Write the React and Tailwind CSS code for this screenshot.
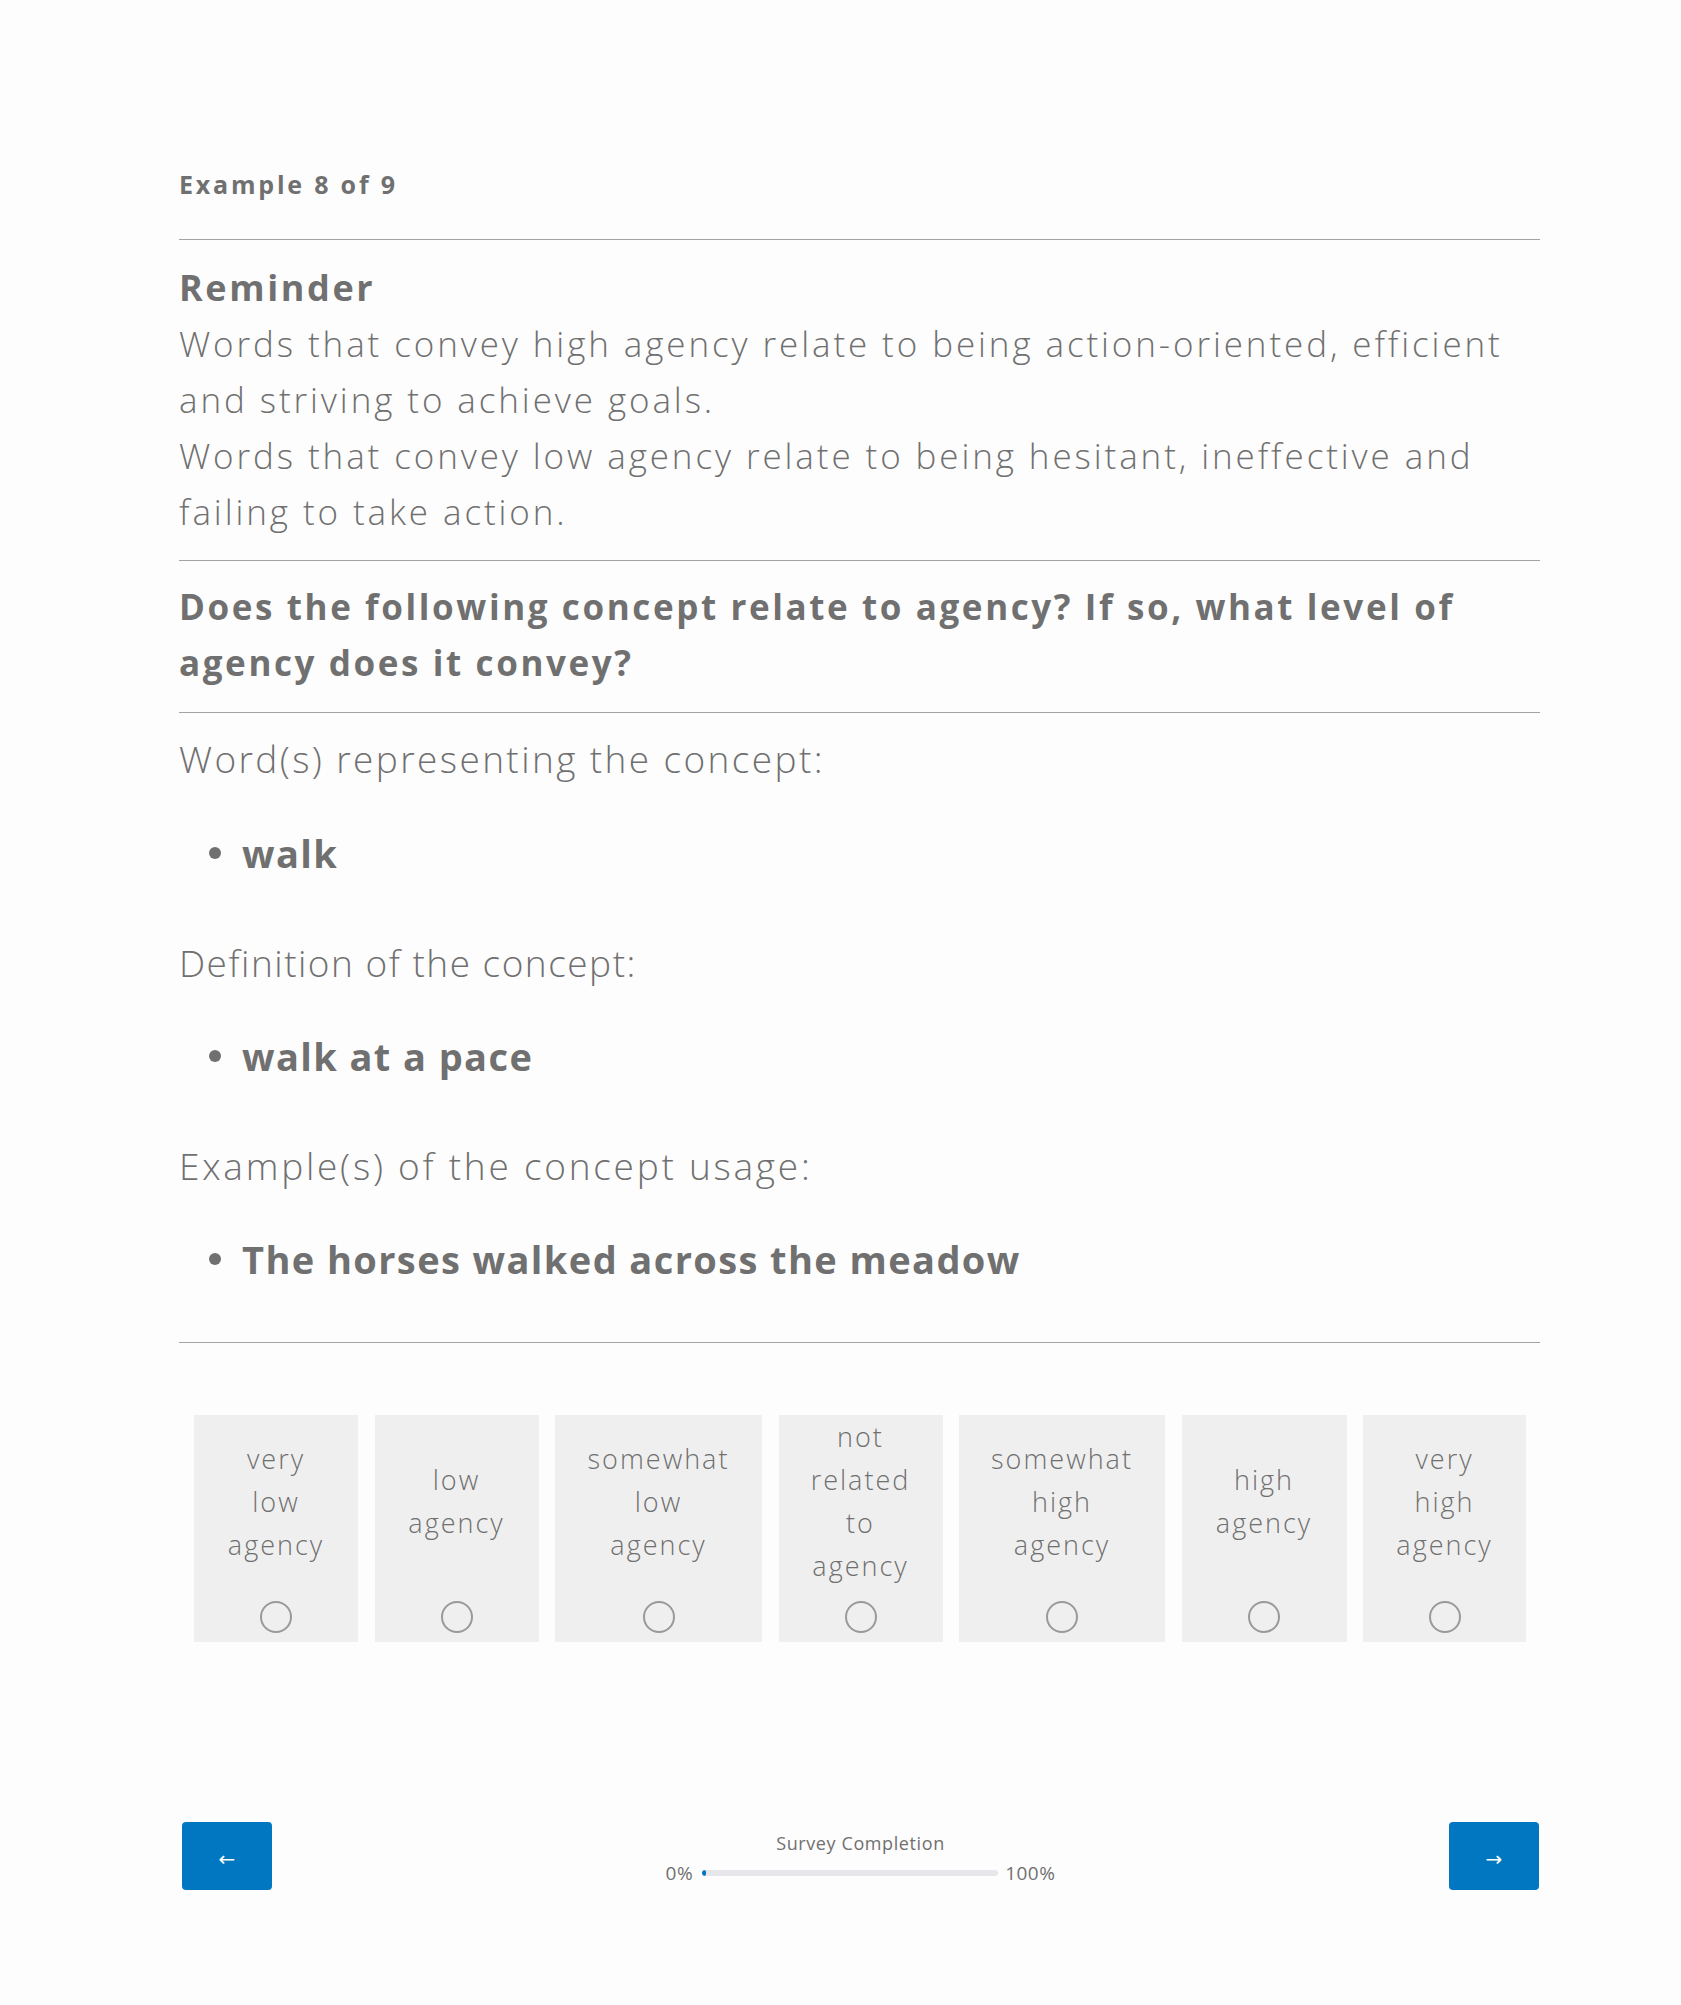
const options = [
  { w: "w-[164px]", lines: ["very", "low", "agency"] },
  { w: "w-[164px]", lines: ["low", "agency"] },
  { w: "w-[207px]", lines: ["somewhat", "low", "agency"] },
  { w: "w-[164px]", lines: ["not", "related", "to", "agency"] },
  { w: "w-[206px]", lines: ["somewhat", "high", "agency"] },
  { w: "w-[165px]", lines: ["high", "agency"] },
  { w: "w-[163px]", lines: ["very", "high", "agency"] },
];

function Rule({ className }) {
  return <div className={"h-px w-full bg-[#a3a3a3] " + className} />;
}

function Label({ children, className }) {
  return (
    <div className={"h-[56px] whitespace-nowrap text-[37px] font-light leading-[56px] " + className}>
      {children}
    </div>
  );
}

function Bullet({ children, className }) {
  return (
    <div className={"flex h-[56px] items-center pl-[30px] " + className}>
      <span className="h-[12px] w-[12px] shrink-0 rounded-full bg-[#707070]" />
      <span className="ml-[21px] whitespace-nowrap text-[38px] font-bold leading-[56px] tracking-[1.4px]">
        {children}
      </span>
    </div>
  );
}

export default function App() {
  return (
    <div className="min-h-[2005px] bg-[#fdfdfd] font-['Open_Sans','Noto_Sans',sans-serif] text-[#707070]">
      <div className="ml-[179px] w-[1361px] pt-[164px] pb-[115px]">
        <div className="h-[40px] text-[25px] font-bold leading-[40px] tracking-[2.8px]">
          Example 8 of 9
        </div>
        <Rule className="mt-[35px]" />

        <div className="mt-[20px] h-[56px] text-[36px] font-bold leading-[56px] tracking-[2.6px]">
          Reminder
        </div>
        <div className="text-[35px] font-light leading-[56px] tracking-[2.9px]">
          <span className="block whitespace-nowrap">
            Words that convey high agency relate to being action-oriented, efficient
          </span>
          <span className="block whitespace-nowrap">and striving to achieve goals.</span>
          <span className="block whitespace-nowrap">
            Words that convey low agency relate to being hesitant, ineffective and
          </span>
          <span className="block whitespace-nowrap">failing to take action.</span>
        </div>
        <Rule className="mt-[20px]" />

        <div className="mt-[18px] text-[35px] font-bold leading-[56px] tracking-[2.6px]">
          <span className="block whitespace-nowrap">
            Does the following concept relate to agency? If so, what level of
          </span>
          <span className="block whitespace-nowrap">agency does it convey?</span>
        </div>
        <Rule className="mt-[21px]" />

        <Label className="mt-[18px] tracking-[2.4px]">Word(s) representing the concept:</Label>
        <Bullet className="mt-[38px]">walk</Bullet>
        <Label className="mt-[54px] tracking-[1.5px]">Definition of the concept:</Label>
        <Bullet className="mt-[37px]">walk at a pace</Bullet>
        <Label className="mt-[54px] tracking-[2.75px]">Example(s) of the concept usage:</Label>
        <Bullet className="mt-[37px]">The horses walked across the meadow</Bullet>

        <Rule className="mt-[55px]" />

        <div className="mt-[72px] flex gap-[16.5px] px-[15px]">
          {options.map((o, i) => (
            <label
              key={i}
              className={"flex h-[227px] shrink-0 cursor-pointer flex-col items-center bg-[#efefef] " + o.w}
            >
              <div className="flex h-[172px] w-full flex-col items-center justify-center text-center text-[27px] font-light leading-[43px] tracking-[2px]">
                {o.lines.map((l, j) => (
                  <span key={j} className="block">
                    {l}
                  </span>
                ))}
              </div>
              <span className="mt-[14px] h-[32px] w-[32px] rounded-full border-2 border-[#999999]" />
            </label>
          ))}
        </div>

        <div className="mt-[180px] flex items-start justify-between">
          <button className="ml-[3px] flex h-[68px] w-[90px] items-center justify-center rounded-[4px] bg-[#0077c0] pt-[6px] font-['DejaVu_Sans',sans-serif] text-[20px] text-white">
            ←
          </button>
          <div className="mt-[9px] flex flex-col items-center">
            <div className="h-[24px] text-[18px] leading-[24px] tracking-[0.6px]">Survey Completion</div>
            <div className="mt-[4px] flex h-[28px] items-center">
              <span className="text-[19px] font-medium leading-[28px] tracking-[0.5px]">0%</span>
              <div className="ml-[9px] h-[6px] w-[296px] overflow-hidden rounded-full bg-[#e7e7eb]">
                <div className="h-full w-[4px] rounded-full bg-[#0077c0]" />
              </div>
              <span className="ml-[7px] text-[19px] font-medium leading-[28px] tracking-[0.5px]">100%</span>
            </div>
          </div>
          <button className="mr-[1px] flex h-[68px] w-[90px] items-center justify-center rounded-[4px] bg-[#0077c0] pt-[6px] font-['DejaVu_Sans',sans-serif] text-[20px] text-white">
            →
          </button>
        </div>
      </div>
    </div>
  );
}
